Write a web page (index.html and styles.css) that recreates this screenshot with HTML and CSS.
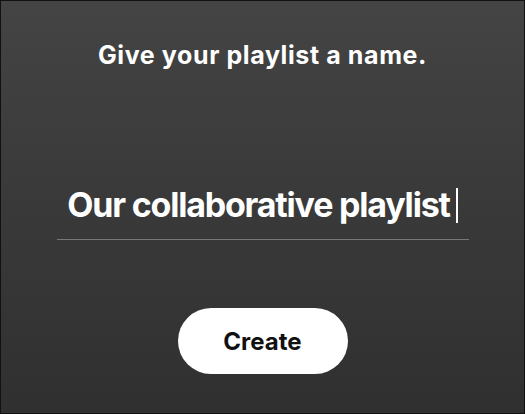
FILE: index.html
```html
<!DOCTYPE html>
<html lang="en">
<head>
<meta charset="UTF-8">
<meta name="viewport" content="width=device-width, initial-scale=1.0">
<title>Create playlist</title>
<link rel="stylesheet" href="styles.css">
</head>
<body>
<div class="dialog">
    <h2 class="prompt">Give your playlist a name.</h2>

    <!-- Playlist name field -->
    <div class="name-field">
        <span class="name-text">Our collaborative playlist</span><span class="caret"></span>
    </div>

    <button class="create-btn">Create</button>
</div>
</body>
</html>
```

FILE: styles.css
```css
html, body {
    margin: 0;
    height: 100%;
}

body {
    font-family: 'Inter', 'Noto Sans', sans-serif;
    background: #111;
}

.dialog {
    box-sizing: border-box;
    height: 100%;
    border: 1px solid #111;
    background: linear-gradient(#444 0%, #3b3b3b 40%, #303030 100%);
    display: flex;
    flex-direction: column;
    align-items: center;
    color: #fff;
}

.prompt {
    margin: 38px 0 0;
    font-size: 25px;
    line-height: 32px;
    font-weight: 700;
    letter-spacing: 0.6px;
}

.name-field {
    margin-top: 114px;
    width: 412px;
    padding-bottom: 14px;
    border-bottom: 1px solid #777;
    display: flex;
    justify-content: center;
    align-items: center;
}

.name-text {
    font-size: 34px;
    line-height: 40px;
    font-weight: 700;
    letter-spacing: -1.2px;
}

.caret {
    width: 2px;
    height: 35px;
    margin-left: 6px;
    background: #fff;
}

.create-btn {
    margin-top: 68px;
    width: 170px;
    height: 66px;
    border: none;
    border-radius: 33px;
    background: #fff;
    color: #111;
    font-family: inherit;
    font-size: 24px;
    font-weight: 700;
    cursor: pointer;
}
```
